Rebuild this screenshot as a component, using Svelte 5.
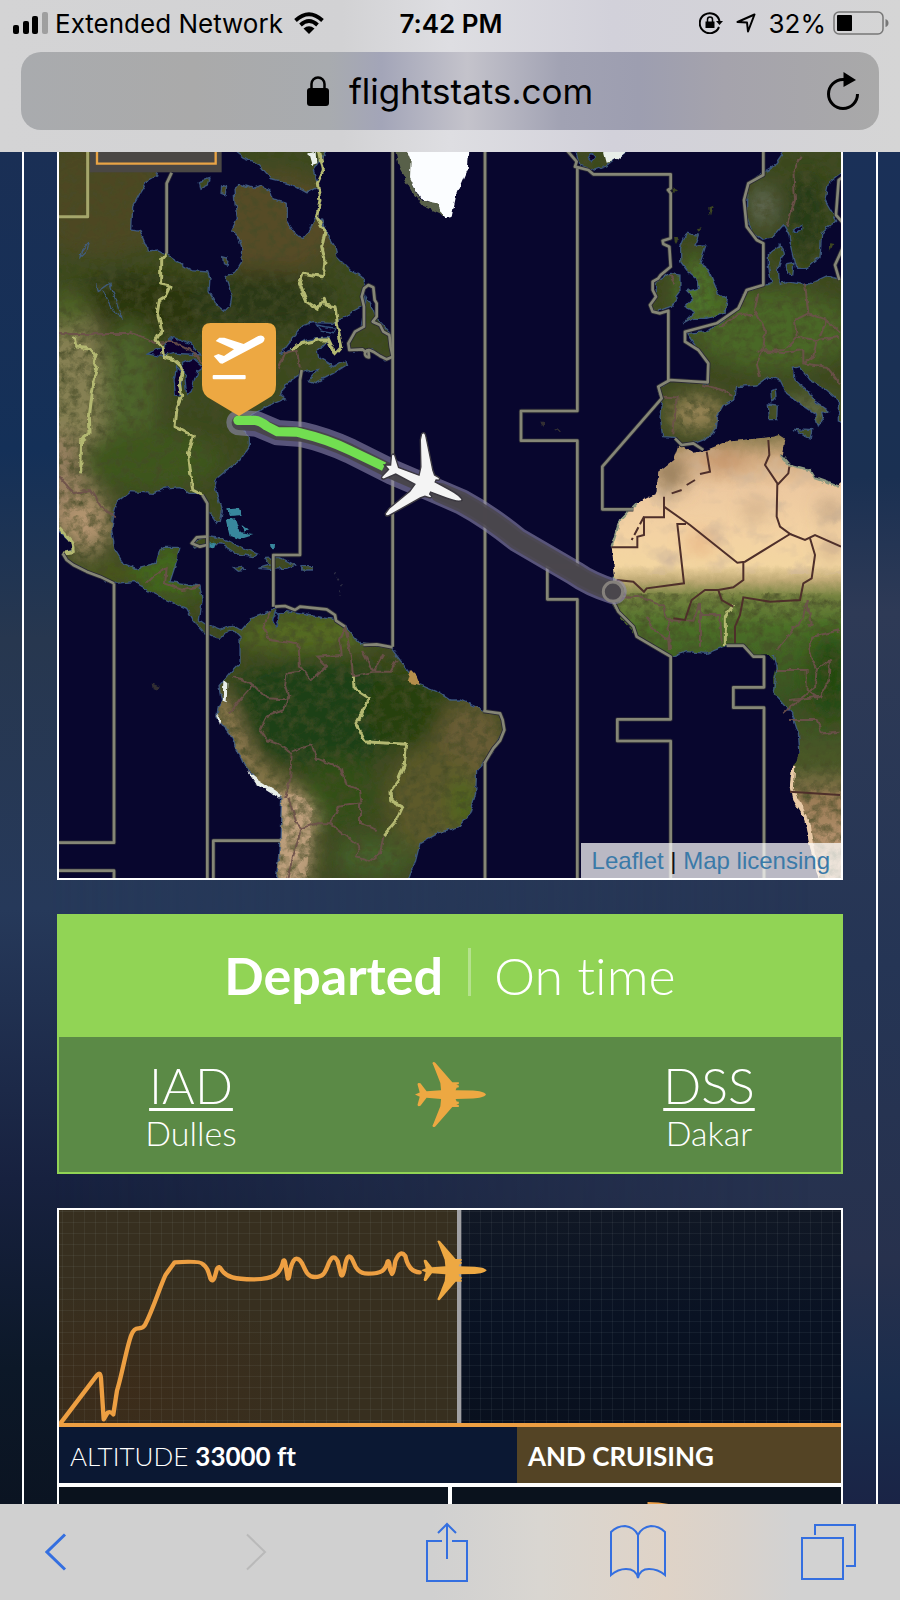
<script lang="ts">
  interface Airport {
    code: string;
    city: string;
  }

  const origin: Airport = { code: "IAD", city: "Dulles" };
  const destination: Airport = { code: "DSS", city: "Dakar" };

  let altitude = $state(33000);
  let phase = $state("AND CRUISING");

  const plane =
    "M98 0C93-7 80-10 62-11L14-12 17-19 23-20V-25L16-27 23-29V-34L5-34-42-88Q-47-92-50-87L-46-78-28-32-26-12-66-9-83-31Q-91-34-91-28L-85-6-98 0-85 6-91 28Q-91 34-83 31L-66 9-26 12-28 32-46 78-50 87Q-47 92-42 88L5 34 23 34V29L16 27 23 25V20L17 19 14 12 62 11C80 10 93 7 98 0Z";

  const mapPlane =
    "M98 0C93-6 80-8 62-9L24-11 24-15 30-17Q32-21 27-22L16-23 8-30-38-84Q-46-94-50-86L-47-74-20-26-16-10-66-7-86-26Q-93-28-92-22L-85-5-98 0-85 5-92 22Q-93 28-86 26L-66 7-16 10-20 26-47 74-50 86Q-46 94-38 84L8 30 16 23 27 22Q32 21 30 17L24 15 24 11 62 9C80 8 93 6 98 0Z";

  const land = [
    // Americas
    "M40 0H370L350 75 325 90 300 130 278 170 275 240 300 245 320 290 322 303 355 300 383 315 420 340 455 362 503 366 510 385 507 425 530 465 555 485 570 470 575 440 563 400 555 380 590 360 605 335 608 300 595 260 575 240 592 205 585 165 582 115 600 102 640 115 665 105 690 120 700 150 742 160 742 215 770 258 790 262 810 240 825 205 845 210 860 250 885 290 890 320 930 360 965 380 975 410 968 470 920 495 880 520 820 518 790 525 745 580 718 615 750 600 800 570 870 562 855 580 835 600 840 625 880 650 915 630 920 645 880 670 825 698 805 692 835 658 790 665 740 700 722 735 738 745 680 770 630 800 600 830 628 860 628 890 600 930 560 960 530 985 525 1010 535 1050 547 1085 540 1115 530 1120 510 1090 497 1051 480 1030 450 1030 420 1010 370 1015 340 1030 270 1025 232 1055 222 1090 215 1140 225 1200 250 1240 285 1255 345 1240 355 1205 375 1192 420 1192 405 1250 390 1295 430 1300 480 1308 487 1350 478 1410 500 1425 540 1440 580 1425 605 1440 635 1405 690 1385 705 1368 710 1400 740 1385 800 1395 880 1408 915 1430 960 1480 1050 1490 1080 1530 1130 1600 1200 1630 1230 1650 1260 1650 1340 1685 1380 1690 1393 1740 1365 1790 1330 1840 1310 1860 1307 1930 1290 1990 1255 2030 1200 2047 1140 2080 1125 2140 1100 2200H708L720 2070 725 1940 650 1890 610 1840 570 1750 530 1700 535 1670 545 1655 537 1610 570 1570 600 1540 600 1460 580 1440 555 1450 540 1465 515 1460 495 1450 460 1410 440 1375 380 1350 320 1320 280 1295 225 1300 140 1265 80 1230 70 1210 100 1200 95 1175 40 1130Z",
    // Baffin Island, Newfoundland
    "M580 0L610 22 650 38 690 85 750 100 800 128 835 110 820 60 860 0Z",
    "M978 440L1000 480 1012 510 1050 550 1058 622 1035 630 1000 600 930 600 925 580 945 545 965 535 975 480Z",
    "M475 95L510 85 505 105 480 118ZM545 105L560 110 556 135 543 130ZM548 320L565 325 562 345 550 340Z",
    // Caribbean
    "M455 1185L475 1165 500 1158 560 1170 600 1190 652 1212 640 1220 590 1212 545 1182 500 1180 465 1192Z",
    "M678 1225L720 1222 765 1245 740 1255 690 1258 655 1255 690 1245ZM580 1252L600 1250 618 1260 595 1264ZM783 1250H817V1260H785Z",
    // Iceland
    "M1610 0L1620 45 1660 60 1700 45 1770 0Z",
    // Scandinavia
    "M2235 0L2200 50 2150 80 2120 110 2120 200 2135 245 2165 268 2200 260 2230 225 2245 250 2270 355 2300 355 2340 320 2345 250 2390 210 2355 150 2365 100 2410 65V0Z",
    // British Isles
    "M1940 250L1975 255 1965 285 1998 285 1980 340 2005 360 2035 430 2062 445 2055 490 2000 505 1960 505 1930 522 1965 485 1935 470 1960 445 1940 425 1975 415 1970 385 1940 360 1922 335 1922 290Z",
    "M1890 370L1920 375 1920 430 1890 470 1850 485 1830 465 1850 430 1845 400Z",
    // Europe
    "M2410 390L2360 378 2300 405 2240 395 2218 400 2215 350 2230 310 2220 285 2185 310 2185 350 2195 400 2120 420 2095 475 2050 510 2000 545 1940 550 1975 600 2005 640 2003 700 1890 690 1855 715 1865 745 1860 800 1868 860 1905 862 1925 885 1960 880 2000 865 2025 840 2030 800 2050 765 2085 745 2090 710 2150 705 2185 680 2220 690 2240 730 2280 760 2325 790 2335 830 2350 810 2345 790 2370 785 2320 750 2300 720 2265 690 2260 655 2280 650 2310 690 2360 720 2395 750 2395 810 2410 815Z",
    "M2185 762L2212 765 2210 812 2188 812ZM2192 720L2206 715 2208 745 2195 752ZM2262 838L2315 842 2310 866ZM2235 345L2262 340 2258 375 2240 370Z",
  ];

  const africa =
    "M1915 885L1960 905 2000 900 2060 875 2200 860 2220 855 2235 865 2225 915 2250 945 2310 960 2325 985 2390 1008 2410 990V2200H2340L2310 2090 2290 2000 2260 1950 2250 1900 2255 1860 2280 1810 2275 1750 2255 1690 2200 1625 2200 1580 2210 1540 2185 1515 2140 1520 2110 1485 2060 1487 2000 1510 1940 1505 1895 1520 1790 1460 1730 1390 1715 1350 1725 1280 1715 1190 1740 1110 1790 1060 1850 1030 1855 965 1900 930Z";

  const water = [
    "M325 612L365 590 400 560 450 580 480 615 440 612 400 610 365 620Z",
    "M430 640L460 625 490 650 470 665 455 720 440 735ZM410 650L425 665 422 738 406 735 402 690Z",
    "M705 1385L720 1405 708 1428 698 1410Z",
    "M2260 240L2285 225 2285 240 2268 250Z",
    "M1645 22L1655 10 1668 18 1655 35Z",
  ];

  // Straight sections of the time zone boundaries
  const zones = [
    "M395 68L380 100V310",
    "M487 1035L502 1060V2200",
    "M222 1300V2078H40M40 2162H222V2200M520 2200V2072H720",
    "M785 660L780 690V1215H700V1370",
    "M1058 0V1490M1335 0V1685M1335 1835V2200",
    "M1580 0L1610 35 1605 50 1645 60 1660 73H1892V115L1884 120 1892 130V265L1868 272 1870 282 1888 290 1892 350 1862 375 1855 385 1838 395 1838 420 1848 440 1830 465 1838 485 1860 490 1885 482V690",
    "M1612 55V783H1443V872H1612V1250H1522V1348H1612V2200",
    "M2170 0V75L2125 100 2112 150 2120 230 2150 270 2170 280V405L2120 420 2095 475 2030 520 1935 545 1935 575 1975 600 2005 640 2003 697 1890 690 1855 710 1865 745 1687 950V1078H1780",
    "M1905 865L1925 885 1960 880 1990 900",
    "M1715 1345L1735 1385 1780 1430 1790 1460 1892 1520V1708H1732V1773H1892V2200",
    "M2060 1487H2110L2140 1520H2172V1612H2080V1673H2172V2200",
    "M2410 80L2396 90 2388 195 2410 220M2410 290L2385 345 2398 390",
    "M1330 1683L1380 1690 1388 1710 1393 1740 1380 1772 1360 1795 1333 1840",
    "M68 1210L80 1230 100 1245 140 1265 180 1280 222 1300M705 1370L735 1368 765 1380 780 1370 860 1378 885 1395 888 1412 915 1430M970 1485L1010 1483 1058 1492",
    "M500 1160L470 1162 455 1180 480 1190 500 1185",
    "M972 530V470L965 440 972 415 985 405 1000 412 1004 450 1010 460 1010 500 998 515 1020 525 1030 545 1048 555 1052 590 1058 620 1040 628 1020 618 1000 605 988 600 975 605 968 598 928 600 925 580 945 545Z",
    "M985 600A10 10 0 1 0 987 622Z",
  ];

  // Zone boundaries that follow rivers and state lines
  const zonesOnLand = [
    "M380 310L362 330V402L390 408 375 440 358 450 352 490 365 540 348 570 366 590 370 620 400 628 430 655 418 700 425 740 412 770 405 830 435 845 460 860 445 910 458 1020 487 1035",
    "M103 560L107 590 150 598 165 615 160 635 173 655 163 690 155 740 148 800 150 850 125 870 122 970",
    "M838 0L850 60 832 100 840 150 830 200 855 245 845 290 855 330 850 380 790 370 778 400 800 455 835 478 850 445 855 465 885 470 895 540 905 590 885 612 865 570 835 570 770 585 755 600",
    "M60 1135L95 1175 100 1205 68 1210",
    "M940 1580L942 1615 988 1645 948 1720 975 1775 1100 1783 1092 1850 1075 1890 1050 1925 1052 1950 1088 1970 1070 2010 1030 2058",
    "M2056 1485V1400L2080 1365",
  ];

  const borders = [
    "M57 552H265L270 545 345 578 400 575 450 600 490 640",
    "M715 655L735 610 770 600 780 655",
    "M57 978L100 1030 150 1020 190 1080 228 1102",
    "M320 1300L345 1275 380 1255 375 1300 430 1320 480 1308",
    "M690 1385L670 1430 690 1470 775 1483 780 1550 815 1590 860 1550 830 1520 905 1515 900 1470 915 1430",
    "M780 1565L740 1570 735 1610 745 1640 732 1680 680 1700 660 1740 680 1770 720 1785 755 1810 750 1890 735 1945",
    "M570 1690L600 1650 640 1605 610 1590 580 1580M640 1605L680 1645 735 1648",
    "M915 1430L930 1500 940 1580 1000 1565 965 1500M1000 1565L1030 1510M1000 1565H1050L1070 1530",
    "M755 1805L815 1785 830 1825 905 1855 920 1905 960 1920 965 1960 895 1970 870 2020",
    "M745 1945L770 2020 785 2035 765 2100 740 2190M785 2035L830 2020 870 2020 960 2090 945 2120 990 2135 1020 2110 1030 2060",
    "M960 1965V2020L1010 2040",
    "M2285 20L2260 60 2265 150 2240 230",
    "M2155 430L2145 480 2175 540 2170 600 2150 640 2160 680M2295 400L2305 490 2360 510 2400 545M2305 490L2265 510 2270 560 2330 570 2400 560M2175 600L2230 610 2290 600 2290 640 2360 650 2400 700M2040 530L2100 490",
    "M2270 560L2230 600 2150 605M2330 570L2320 620 2290 640M2100 490L2145 500M2360 510L2340 560",
    "M1990 705L2030 715 2080 735M1870 740L1910 742 1900 850",
    "M1890 375L1905 400",
    "M1740 1345L1800 1340 1870 1370 1885 1420 1890 1500M1735 1320L1770 1345M1885 1410L1960 1415 1980 1360 1980 1490M1980 1395H2040L2045 1480M2300 1350L2290 1400 2210 1500M2300 1350L2315 1420 2305 1430M2400 1440L2320 1460 2305 1500 2330 1560 2370 1530 2365 1590 2340 1640 2250 1650M2210 1560H2300V1620L2335 1645M2250 1710L2330 1710 2350 1750 2395 1745",
    "M1820 1400L1850 1450 1890 1470M2330 1560L2325 1610 2230 1690",
  ];

  const desertBorders = [
    "M2000 905L2010 965 1980 972M1965 990L1940 1005M1925 1020L1895 1030M1872 1040V1102H1812V1155L1792 1160V1192H1715",
    "M1872 1070L1950 1125 2092 1238 2115 1235 2250 1152 2220 1130 2210 1100 2212 1000 2175 945 2188 915 2185 870M2212 1005L2245 970 2248 950",
    "M2250 1152L2295 1170 2325 1155 2403 1190M1938 1122L1912 1122 1932 1300 1820 1315 1812 1325 1780 1295 1730 1290",
    "M2110 1238V1290L2080 1312 2035 1320 1995 1320 1955 1350 1935 1410 1900 1405M2035 1320L2045 1350 2080 1370M2310 1165L2325 1215 2315 1285 2290 1300 2280 1350 2190 1355 2110 1342 2100 1395 2085 1430V1480",
    "M2250 1925L2400 1935",
  ];

  const routeAhead = "M1200 1028L1265 1056Q1350 1102 1430 1168L1605 1270Q1650 1302 1722 1325";
  const route = "M597 818L650 822 712 848 785 853Q860 870 930 903L1058 967 1200 1028 1265 1056Q1350 1102 1430 1168L1605 1270Q1650 1302 1722 1325";
</script>

<div class="screen">
  <header class="browser-top">
    <div class="status-bar">
      <div class="status-group">
        <svg class="signal" viewBox="0 0 35 22" aria-hidden="true">
          <rect x="0" y="13" width="6" height="9" rx="2" />
          <rect x="10" y="9" width="6" height="13" rx="2" />
          <rect x="19" y="4" width="6" height="18" rx="2" />
          <rect x="29" y="0" width="6" height="22" rx="2" opacity="0.25" />
        </svg>
        <span>Extended Network</span>
        <svg class="wifi" viewBox="0 0 30 22" aria-hidden="true">
          <path d="M1.500 8.500Q15-4 28.500 8.500M6.500 13Q15 5 23.500 13" fill="none" stroke="#000" stroke-width="3.800" />
          <path d="M9.500 16.500Q15 12 20.500 16.500L15 22Z" />
        </svg>
      </div>
      <span class="clock">7:42 PM</span>
      <div class="status-group right">
        <svg class="rotation" viewBox="0 0 24 22" aria-hidden="true">
          <path d="M20 15A10 10 0 1 1 20.500 9" fill="none" stroke="#000" stroke-width="2" />
          <path d="M17 9H24L20.500 13ZM6.500 9.500H15.500V16H6.500Z" />
          <path d="M8.500 10V7.500A2.500 2.500 0 0 1 13.500 7.500V10" fill="none" stroke="#000" stroke-width="1.500" />
        </svg>
        <svg class="location" viewBox="0 0 20 20" aria-hidden="true">
          <path d="M1.500 9L18.500 1.500 12 18.500 11 9.500Z" fill="none" stroke="#000" stroke-width="2" stroke-linejoin="round" />
        </svg>
        <span>32%</span>
        <svg class="battery" viewBox="0 0 56 25" aria-hidden="true">
          <rect x="1" y="1" width="49" height="22" rx="5" fill="none" stroke="#777" stroke-width="1.500" />
          <rect x="4" y="4" width="15" height="16" rx="1" />
          <path d="M52.500 8Q55.500 9 55.500 12T52.500 16Z" fill="#777" />
        </svg>
      </div>
    </div>
    <div class="url-bar">
      <button class="address" type="button">
        <svg class="lock" viewBox="0 0 22 30" aria-hidden="true">
          <rect x="0" y="12" width="22" height="18" rx="3" />
          <path d="M4.500 13V8A6.500 6.500 0 0 1 17.500 8V13" fill="none" stroke="#000" stroke-width="2.500" />
        </svg>
        <span>flightstats.com</span>
      </button>
      <button class="reload" type="button" aria-label="Reload page">
        <svg viewBox="0 0 32 38" aria-hidden="true">
          <path d="M30.500 22A14.500 14.500 0 1 1 16 7.500H20" fill="none" stroke="#000" stroke-width="3" />
          <path d="M16.500 0L29 8 16.500 15Z" />
        </svg>
      </button>
    </div>
  </header>

  <main>
    <div class="page-frame">
      <section class="map" aria-label="Flight map">
        <svg viewBox="57 6 2346 2178" role="img" aria-label="Route from Dulles to Dakar">
          <defs>
            <filter id="rough" x="0" y="0" width="2450" height="2200" filterUnits="userSpaceOnUse">
              <feTurbulence type="fractalNoise" baseFrequency="0.045" numOctaves="2" seed="4" />
              <feDisplacementMap in="SourceGraphic" scale="16" xChannelSelector="R" yChannelSelector="G" />
            </filter>
            <filter id="soft" x="-50%" y="-50%" width="200%" height="200%">
              <feGaussianBlur stdDeviation="30" />
            </filter>
            <filter id="terrain" x="0" y="0" width="2450" height="2200" filterUnits="userSpaceOnUse">
              <feTurbulence type="fractalNoise" baseFrequency="0.035 0.04" numOctaves="4" seed="9" />
              <feColorMatrix values="0 0 0 0 0.06  0 0 0 0 0.07  0 0 0 0 0.02  1.700 0 0 0 -0.650" />
            </filter>
            <filter id="sand" x="1700" y="900" width="710" height="370" filterUnits="userSpaceOnUse">
              <feTurbulence type="fractalNoise" baseFrequency="0.012 0.016" numOctaves="3" seed="21" />
              <feColorMatrix values="0 0 0 0 0.64  0 0 0 0 0.48  0 0 0 0 0.33  2 0 0 0 -0.980" />
            </filter>
            <linearGradient id="africa-fill" gradientUnits="userSpaceOnUse" x1="0" y1="860" x2="0" y2="2190">
              <stop offset="0" stop-color="#8b7c50" />
              <stop offset="0.05" stop-color="#d0a97f" />
              <stop offset="0.12" stop-color="#edc9a0" />
              <stop offset="0.22" stop-color="#f3d2a3" />
              <stop offset="0.29" stop-color="#f3d6a1" />
              <stop offset="0.325" stop-color="#bda873" />
              <stop offset="0.36" stop-color="#74823f" />
              <stop offset="0.43" stop-color="#4b6f27" />
              <stop offset="0.52" stop-color="#3d5e22" />
              <stop offset="0.6" stop-color="#36511f" />
              <stop offset="0.74" stop-color="#4c5929" />
              <stop offset="0.82" stop-color="#9b7c56" />
              <stop offset="1" stop-color="#c9a381" />
            </linearGradient>
            <clipPath id="land-clip">
              {#each land as d}<path {d} />{/each}
            </clipPath>
            <clipPath id="africa-clip"><path d={africa} /></clipPath>
            <clipPath id="south-clip"><rect x="1700" y="1330" width="710" height="860" /></clipPath>
          </defs>

          <rect width="2460" height="2200" fill="#08062e" />

          <g filter="url(#rough)">
            <g fill="#3b481e">
              {#each land as d}<path {d} />{/each}
            </g>
            <path d={africa} fill="url(#africa-fill)" />
            <g clip-path="url(#land-clip)">
              <g filter="url(#soft)">
                <ellipse cx="180" cy="150" rx="230" ry="170" fill="#4e4622" />
                <ellipse cx="700" cy="220" rx="200" ry="160" fill="#574b26" />
                <ellipse cx="300" cy="470" rx="250" ry="100" fill="#2a340f" />
                <ellipse cx="660" cy="450" rx="220" ry="90" fill="#2b3814" />
                <ellipse cx="90" cy="750" rx="105" ry="330" fill="#868052" />
                <ellipse cx="90" cy="480" rx="60" ry="60" fill="#4f6328" />
                <ellipse cx="60" cy="1000" rx="80" ry="150" fill="#957e5e" />
                <ellipse cx="270" cy="720" rx="80" ry="210" fill="#4d6529" />
                <ellipse cx="330" cy="930" rx="220" ry="90" fill="#3d561f" />
                <ellipse cx="140" cy="1120" rx="75" ry="90" fill="#b39470" />
                <ellipse cx="200" cy="1270" rx="180" ry="35" fill="#49591f" />
                <ellipse cx="400" cy="1270" rx="120" ry="80" fill="#42691f" />
                <ellipse cx="800" cy="1450" rx="220" ry="60" fill="#556a24" />
                <ellipse cx="830" cy="1690" rx="300" ry="160" fill="#1f3f12" />
                <ellipse cx="1100" cy="1680" rx="120" ry="110" fill="#26400f" />
                <ellipse cx="1290" cy="1800" rx="110" ry="150" fill="#6a5d36" />
                <ellipse cx="1180" cy="1950" rx="140" ry="160" fill="#5d5a2b" />
                <ellipse cx="1270" cy="1960" rx="40" ry="80" fill="#50681f" />
                <ellipse cx="900" cy="1930" rx="120" ry="110" fill="#315019" />
                <ellipse cx="1000" cy="2120" rx="120" ry="60" fill="#44602a" />
                <path d="M530 1640L620 1850 760 1960" fill="none" stroke="#aa8b5e" stroke-width="50" />
              </g>
              <path d="M720 1910L800 1940 835 1990 815 2070 805 2200H700Z" fill="#c09f7d" filter="url(#soft)" />
              <path d="M735 1930L790 1940 820 1980 810 2030 800 2190H715L722 1980Z" fill="#c4a482" opacity="0.75" />
              <g filter="url(#soft)">
                <ellipse cx="2170" cy="170" rx="30" ry="60" fill="#70756a" />
                <ellipse cx="2300" cy="200" rx="60" ry="130" fill="#263b13" />
                <ellipse cx="2200" cy="540" rx="240" ry="120" fill="#486828" />
                <ellipse cx="1970" cy="790" rx="85" ry="55" fill="#9c8759" />
                <ellipse cx="1970" cy="420" rx="60" ry="100" fill="#50782c" />
                <ellipse cx="2300" cy="780" rx="90" ry="40" fill="#67704a" />
              </g>
              <rect width="2450" height="2200" filter="url(#terrain)" />
            </g>
            <g clip-path="url(#africa-clip)">
              <rect x="1700" y="900" width="710" height="370" filter="url(#sand)" />
              <g filter="url(#soft)">
                <ellipse cx="1890" cy="970" rx="50" ry="55" fill="#937a58" />
                <ellipse cx="2145" cy="1080" rx="25" ry="22" fill="#a8896d" />
                <ellipse cx="2370" cy="1080" rx="25" ry="20" fill="#7d6858" />
                <ellipse cx="1980" cy="1180" rx="35" ry="20" fill="#dd9868" />
                <ellipse cx="2050" cy="930" rx="60" ry="25" fill="#c08b60" />
                <ellipse cx="2370" cy="1200" rx="30" ry="20" fill="#b59173" />
                <ellipse cx="2370" cy="1580" rx="60" ry="130" fill="#22480f" />
              </g>
              <g clip-path="url(#south-clip)">
                <rect width="2450" height="2200" filter="url(#terrain)" />
              </g>
              <path d="M2255 1850L2250 1920 2300 2020 2330 2190" fill="none" stroke="#e8c9a6" stroke-width="22" />
            </g>
            <g fill="none" stroke="#42618f" stroke-width="4" opacity="0.8">
              {#each land as d}<path {d} />{/each}
              <path d="M2200 1515L2210 1560 2200 1625 2255 1690 2275 1750 2280 1810M1895 1520L1940 1505 2000 1510 2060 1487" />
              <path d="M170 400L175 425 210 400 245 505 225 490 190 425M120 325L125 300 148 275 140 305Z" />
            </g>
            <g fill="#08062e" stroke="#36547e" stroke-width="4">
              {#each water as d}<path {d} />{/each}
              <path d="M830 525L885 535 880 548 840 540Z" />
            </g>
            <path d="M1085 0L1100 70 1140 145 1190 165 1215 205 1235 200 1250 130 1280 60 1285 0Z" fill="#fbfdff" />
            <path d="M1065 0L1080 60 1120 130 1150 168 1200 190 1215 205 1190 160 1140 150 1110 85 1112 30 1100 0Z" fill="#59614a" />
            <path d="M1690 0L1700 38 1730 30 1765 0ZM550 1590L562 1600 560 1660 548 1655ZM530 1690L545 1710 540 1725ZM805 10L830 5 832 40 815 45ZM620 1860L650 1885 705 1920 725 1935 720 1945 645 1898Z" fill="#e8eee9" />
            <path d="M1110 1560L1130 1580 1140 1605 1100 1595Z" fill="#b58e4c" />
            <g fill="#39879d">
              <path d="M565 1078L600 1075 608 1095 570 1098ZM560 1108L585 1105 600 1150 640 1155 600 1168 572 1158ZM605 1125L625 1140 610 1148ZM495 1180L525 1175 520 1190 500 1195ZM690 1185L705 1185 704 1198 692 1196Z" />
            </g>
            <path d="M335 1600L360 1610 350 1622 338 1618ZM1500 815H1512V828ZM1550 836L1566 842 1550 843Z" fill="#302e33" />
            <path d="M885 1270L900 1300 900 1340" fill="none" stroke="#2e2e44" stroke-width="5" stroke-dasharray="6 12" />
            <path d="M1895 110L1915 120 1900 130ZM2005 175L2018 170 2010 200ZM1970 235L1985 232 1975 245ZM1902 260L1918 262 1905 285ZM2370 280L2380 282 2370 305Z" fill="#3c4520" />
            <g fill="none" stroke="#6d514b" stroke-width="6" opacity="0.9">
              {#each borders as d}<path {d} />{/each}
            </g>
            <path d="M1715 1190L1740 1110 1790 1060M1725 1280L1715 1350M2225 915L2250 945 2310 960 2325 985 2390 1008" fill="none" stroke="#8b9880" stroke-width="7" />
            <g fill="none" stroke="#b3b871" stroke-width="9" stroke-linejoin="round">
              {#each zonesOnLand as d}<path {d} />{/each}
            </g>
          </g>

          <g fill="none" stroke="#4e2f2a" stroke-width="6">
            {#each desertBorders as d}<path {d} />{/each}
            <path d="M1812 1100L1775 1170" stroke-dasharray="26 10" />
          </g>

          <g fill="none" stroke-linejoin="round">
            {#each zones as d}
              <path {d} stroke="#2b2a35" stroke-width="13" />
            {/each}
            {#each zones as d}
              <path {d} stroke="#858676" stroke-width="8" />
            {/each}
            <path d="M143 0V200H40" stroke="#a5a66b" stroke-width="9" />
          </g>

          <rect x="150" y="0" width="395" height="67" fill="#4a4744" />
          <path d="M171 0V41H527V0" fill="none" stroke="#e9a445" stroke-width="7" />

          <g fill="none" stroke-linecap="round" stroke-linejoin="round">
            <path d={route} stroke="#8d89ad" stroke-opacity="0.6" stroke-width="76" />
            <path d={route} stroke="#48454a" stroke-opacity="0.95" stroke-width="44" />
            <path d={routeAhead} stroke="#4a474c" stroke-opacity="0.85" stroke-width="60" />
            <circle cx="1719" cy="1325" r="29" stroke="#85817c" stroke-width="9" />
            <path d="M592 811H645Q660 812 680 828L712 845 770 846 785 850Q860 867 930 901L1032 950" stroke="#72de51" stroke-width="28" stroke-linecap="butt" />
            <path d="M594 811H600" stroke="#72de51" stroke-width="28" />
          </g>
          <path d="M597 798L513 748Q486 735 486 705V545Q486 519 512 519H682Q708 519 708 545V705Q708 735 685 745Z" fill="#eda842" />
          <g fill="#fff">
            <path d="M521 618L535 612 552 618 582 598 527 573 538 563 553 563 611 582 655 558Q670 553 674 565 674 574 667 578L547 641 540 640Z" />
            <rect x="518" y="675" width="99" height="13" rx="3" />
          </g>
          <path d={mapPlane} transform="translate(1150 998) rotate(24.500) scale(1.310 1.530)" fill="#f4f4f4" stroke="#3b3840" stroke-width="3" />
        </svg>
        <div class="attribution">
          <a href="#leaflet">Leaflet</a> | <a href="#licensing">Map licensing</a>
        </div>
      </section>

      <section class="status-card">
        <h2>
          <strong>Departed</strong>
          <span class="timing">On time</span>
        </h2>
        <div class="airports">
          <div class="airport">
            <a href="#origin">{origin.code}</a>
            <span>{origin.city}</span>
          </div>
          <svg class="card-plane" viewBox="-98 -90 196 180" aria-hidden="true"><path d={plane} /></svg>
          <div class="airport">
            <a href="#destination">{destination.code}</a>
            <span>{destination.city}</span>
          </div>
        </div>
      </section>

      <section class="telemetry">
        <svg class="chart" viewBox="57 30 2346 639" role="img" aria-label="Altitude over time">
          <defs>
            <pattern id="grid" width="33" height="33" patternUnits="userSpaceOnUse">
              <path d="M1.500 0V33M0 1.500H33" stroke="#b7c3c8" stroke-opacity="0.070" stroke-width="3" />
            </pattern>
            <linearGradient id="sky" x1="0" y1="0" x2="0" y2="1">
              <stop offset="0" stop-color="#111825" />
              <stop offset="0.5" stop-color="#091223" />
              <stop offset="1" stop-color="#09101e" />
            </linearGradient>
            <radialGradient id="glow" cx="0.15" cy="0.85" r="0.5">
              <stop offset="0" stop-color="#3c2c1a" />
              <stop offset="1" stop-color="#372f1f" />
            </radialGradient>
          </defs>
          <rect x="57" y="30" width="2346" height="640" fill="url(#sky)" />
          <rect x="57" y="30" width="1194" height="640" fill="url(#glow)" />
          <rect x="57" y="30" width="2346" height="640" fill="url(#grid)" />
          <rect x="1251" y="30" width="13" height="640" fill="#a0a0a3" />
          <path
            d="M63 668L170 527Q181 512 183 535L191 658 203 638Q211 633 220 643L231 572C245 530 260 440 274 405Q282 384 296 385 311 384 316 373C340 325 360 260 377 224L404 187Q480 182 488 192C503 203 505 215 511 235Q518 250 525 228L531 206Q537 195 545 210C560 232 585 238 640 238 705 238 722 220 730 182Q735 177 737 197L743 235Q747 240 750 212 760 170 773 177C793 180 790 231 824 231 858 231 857 207 869 184Q881 160 893 184L903 224Q908 234 914 204 920 165 930 170C945 177 938 221 985 221 1025 221 1036 212 1043 184Q1048 180 1050 208L1056 222Q1061 222 1066 184 1080 147 1096 168 1106 216 1139 217"
            fill="none" stroke="#ed9f42" stroke-width="13" stroke-linejoin="round" stroke-linecap="round" />
          <path d={plane} transform="translate(1242 211)" fill="#eda842" />
        </svg>
        <div class="readings">
          <div class="reading altitude">ALTITUDE <strong>{altitude} ft</strong></div>
          <div class="reading phase"><strong>{phase}</strong></div>
        </div>
        <div class="gauges">
          <div class="gauge"></div>
          <div class="gauge">
            <svg viewBox="0 0 390 17" aria-hidden="true"><path d="M196 15Q210 15 221 18H196Z" fill="#eda04a" /></svg>
          </div>
        </div>
      </section>
    </div>
  </main>

  <nav class="toolbar" aria-label="Browser">
    <button class="back" type="button" aria-label="Back">
      <svg width="22" height="38" viewBox="0 0 22 38"><path d="M20 1.500L2 19 20 36.500" stroke-width="3" /></svg>
    </button>
    <button type="button" aria-label="Forward" disabled>
      <svg width="22" height="38" viewBox="0 0 22 38"><path d="M2 1.500L20 19 2 36.500" stroke-width="2" /></svg>
    </button>
    <button type="button" aria-label="Share">
      <svg width="42" height="60" viewBox="0 0 42 60"><path d="M16 19H1V59H41V19H26M21 37V2M12 11L21 2 30 11" /></svg>
    </button>
    <button type="button" aria-label="Bookmarks">
      <svg width="56" height="54" viewBox="0 0 56 54"><path d="M28 10Q24 2 15 1 7 1 1 7V50Q8 44 16 44 26 44 28 53 30 44 39 44 48 44 55 50V7Q49 1 41 1 32 2 28 10ZM28 10V53" /></svg>
    </button>
    <button type="button" aria-label="Tabs">
      <svg width="56" height="56" viewBox="0 0 56 56"><path d="M1 14H42V55H1ZM14 11V1H54V42H45" /></svg>
    </button>
  </nav>
</div>

<style>
  :global(body) {
    background: #111c33;
  }

  .screen {
    display: flex;
    flex-direction: column;
    min-height: 100vh;
    font-family: Lato, "Open Sans", sans-serif;
    font-variant-ligatures: none;
    color: #fff;
  }

  button {
    display: flex;
    align-items: center;
    justify-content: center;
    padding: 0;
    border: 0;
    background: none;
    color: inherit;
    font: inherit;
  }

  .browser-top {
    padding: 0 21px 22px;
    background: linear-gradient(90deg, #d4d4d5 0%, #d2d2d4 38%, #dedee2 50%, #d2d1da 68%, #d5d5d5 100%);
    color: #000;
    font-family: Inter, sans-serif;
  }

  .status-bar {
    display: grid;
    grid-template-columns: 1fr auto 1fr;
    align-items: center;
    height: 52px;
    padding-bottom: 6px;
    box-sizing: border-box;
    margin: 0 -10px 0 -8px;
    font-size: 26px;
    white-space: nowrap;
  }

  .status-group {
    display: flex;
    align-items: center;
    gap: 7px;
  }

  .status-group.right {
    justify-content: flex-end;
  }

  .signal {
    width: 35px;
    height: 22px;
  }

  .wifi {
    width: 30px;
    height: 22px;
    margin-left: 4px;
  }

  .clock {
    font-weight: 600;
  }

  .rotation {
    width: 24px;
    height: 22px;
    margin-right: 6px;
  }

  .location {
    width: 20px;
    height: 20px;
    margin-right: 6px;
  }

  .battery {
    width: 56px;
    height: 25px;
  }

  .url-bar {
    display: grid;
    grid-template-columns: 1fr auto 1fr;
    align-items: center;
    height: 78px;
    padding: 0 20px;
    border-radius: 20px;
    background: linear-gradient(90deg, #a9abae 0%, #aaaaaa 20%, #a8abaf 36%, #a3a5b8 42%, #c4c3cb 52%, #a1a2b3 63%, #9d9eb0 72%, #a5a3ac 82%, #a9a9a9 100%);
  }

  .address {
    grid-column: 2;
    gap: 20px;
    font-size: 35px;
    line-height: 44px;
  }

  .lock {
    width: 22px;
    height: 30px;
  }

  .reload {
    justify-self: end;
  }

  .reload svg {
    width: 32px;
    height: 38px;
  }

  main {
    position: relative;
    flex: 1;
    padding: 0 22px;
    background: linear-gradient(180deg, #1a3058 0%, #1a3052 24%, #2e3a56 34%, #253555 60%, #27314d 82%, #1a2c4c 92%, #1a2446 100%);
  }

  main::before {
    content: "";
    position: absolute;
    inset: 0;
    background: linear-gradient(180deg, #1a2f55 0%, #143058 22%, #27374f 36%, #26395a 56%, #17213f 76%, #0c1828 90%, #0b1422 100%);
    mask-image: linear-gradient(90deg, #000 5%, transparent 90%);
  }

  .page-frame {
    position: relative;
    display: flex;
    flex-direction: column;
    gap: 34px;
    padding: 0 33px;
    border: solid #fff;
    border-width: 0 2px;
  }

  .map {
    position: relative;
    border: 2px solid #fff;
    border-top: 0;
  }

  .map > svg,
  .chart {
    display: block;
    width: 100%;
  }

  .attribution {
    position: absolute;
    right: 0;
    bottom: 0;
    padding: 1px 11px 0 11px;
    background: rgba(255, 255, 255, 0.72);
    color: #111;
    font-family: "Liberation Sans", Arial, sans-serif;
    font-size: 24px;
    line-height: 34px;
  }

  .attribution a {
    color: #3a7aa8;
    text-decoration: none;
  }

  .status-card {
    border: 2px solid #91d455;
    background: #5b8a46;
  }

  h2 {
    display: flex;
    align-items: center;
    justify-content: center;
    gap: 25px;
    height: 121px;
    padding-bottom: 4px;
    box-sizing: border-box;
    margin: 0;
    background: #91d455;
    font-size: 52px;
    font-weight: 300;
  }

  h2 strong {
    font-weight: 700;
  }

  .timing {
    position: relative;
    padding-left: 26px;
  }

  .timing::before {
    content: "";
    position: absolute;
    left: 0;
    top: 4px;
    width: 3px;
    height: 48px;
    background: #b5e28d;
  }

  .airports {
    display: grid;
    grid-template-columns: 264fr 254fr 264fr;
    align-items: center;
    justify-items: center;
    height: 135px;
  }

  .airport {
    display: flex;
    flex-direction: column;
    align-items: center;
    font-size: 34px;
    font-weight: 300;
    line-height: 40px;
  }

  .airport a {
    color: #fff;
    font-size: 50px;
    line-height: 56px;
    text-decoration-thickness: 3px;
    text-underline-offset: 4px;
    text-decoration-skip-ink: none;
  }

  .card-plane {
    width: 71px;
    margin-bottom: 20px;
    fill: #eda842;
  }

  .telemetry {
    border: 2px solid #fff;
    border-bottom: 0;
  }

  .readings {
    display: grid;
    grid-template-columns: 458fr 324fr;
    border-top: 4px solid #ed9f42;
    border-bottom: 4px solid #fff;
    font-size: 26px;
    line-height: 56px;
  }

  .reading {
    padding: 1px 0 0 11px;
    height: 56px;
    box-sizing: border-box;
    background: #0b1833;
  }

  .reading.altitude {
    font-weight: 300;
  }

  .reading strong {
    font-weight: 700;
  }

  .reading.phase {
    background: #544425;
  }

  .gauges {
    display: grid;
    grid-template-columns: 1fr 1fr;
    gap: 4px;
    background: #fff;
  }

  .gauge {
    height: 17px;
    background: #0a121d;
  }

  .gauge svg {
    display: block;
    width: 100%;
  }

  .toolbar {
    display: flex;
    align-items: center;
    justify-content: space-between;
    height: 96px;
    padding: 0 43px 0 45px;
    background: linear-gradient(90deg, #d0d0d0 0%, #d0d0d0 48%, #d9d6d1 60%, #dfd3c7 74%, #d8d2cc 82%, #d2d2d2 88%);
  }

  .toolbar button {
    width: 56px;
    height: 80px;
    color: #346fe0;
  }

  .toolbar .back {
    width: 48px;
    justify-content: flex-start;
  }

  .toolbar button:disabled {
    color: #b9b9b9;
  }

  .toolbar svg {
    flex: none;
    fill: none;
    stroke: currentColor;
    stroke-width: 2;
  }
</style>
